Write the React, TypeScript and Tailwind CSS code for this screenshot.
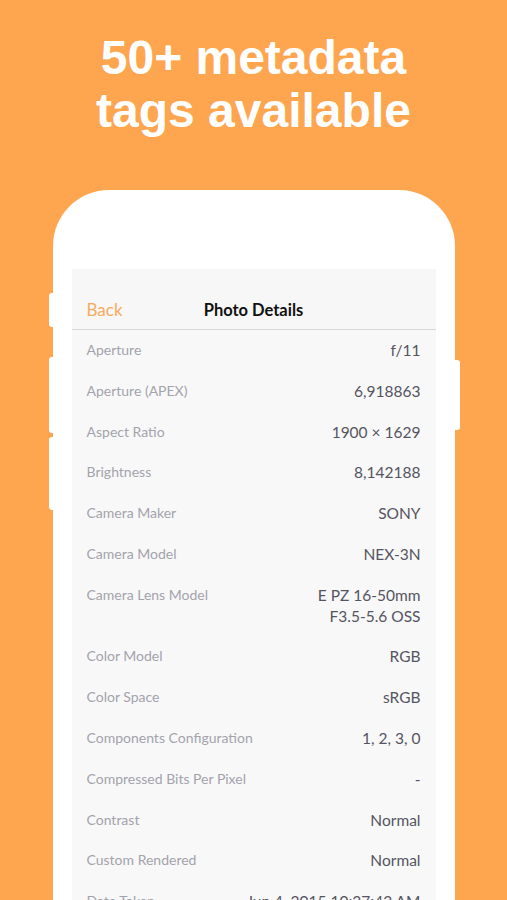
const rows: { label: string; value: string[] }[] = [
  { label: "Aperture", value: ["f/11"] },
  { label: "Aperture (APEX)", value: ["6,918863"] },
  { label: "Aspect Ratio", value: ["1900 × 1629"] },
  { label: "Brightness", value: ["8,142188"] },
  { label: "Camera Maker", value: ["SONY"] },
  { label: "Camera Model", value: ["NEX-3N"] },
  { label: "Camera Lens Model", value: ["E PZ 16-50mm", "F3.5-5.6 OSS"] },
  { label: "Color Model", value: ["RGB"] },
  { label: "Color Space", value: ["sRGB"] },
  { label: "Components Configuration", value: ["1, 2, 3, 0"] },
  { label: "Compressed Bits Per Pixel", value: ["-"] },
  { label: "Contrast", value: ["Normal"] },
  { label: "Custom Rendered", value: ["Normal"] },
  { label: "Date Taken", value: ["Jun 4, 2015 10:37:42 AM"] },
];

export default function App() {
  return (
    <div className="h-[900px] w-[507px] overflow-hidden bg-[#fea54f]">
      {/* Headline */}
      <h1 className="pt-[31px] text-center font-['Liberation_Sans',Arial,sans-serif] text-[48px] font-bold leading-[53px] text-white">
        50+ metadata
        <br />
        tags available
      </h1>

      {/* Phone */}
      <div className="relative mx-auto mt-[53px] h-[800px] w-[402px] rounded-t-[56px] bg-white pt-[79px]">
        {/* side buttons */}
        <div className="absolute left-[-4px] top-[103px] h-[34px] w-[5px] rounded-l-[3px] bg-white" />
        <div className="absolute left-[-4px] top-[167px] h-[76px] w-[5px] rounded-l-[3px] bg-white" />
        <div className="absolute left-[-4px] top-[247px] h-[73px] w-[5px] rounded-l-[3px] bg-white" />
        <div className="absolute right-[-5px] top-[170px] h-[70px] w-[6px] rounded-r-[3px] bg-white" />

        {/* Screen */}
        <div className="mx-auto w-[364px] bg-[#f8f8f9] font-['Lato','Open_Sans',sans-serif]">
          <div className="grid h-[61px] grid-cols-[1fr_auto_1fr] items-end border-b-[1.5px] border-[#d8d8d8] bg-[#f7f7f7] px-[15px] pb-[9px]">
            <span className="text-[17px] leading-[20px] text-[#f8ab5c]">Back</span>
            <span className="text-[16.5px] leading-[20px] font-bold text-[#111]">
              Photo Details
            </span>
            <span />
          </div>
          <div className="flex flex-col">
            {rows.map((r) => (
              <div
                key={r.label}
                className="flex items-start justify-between px-[15px] py-[10px]"
              >
                <span className="text-[14px] leading-[20.8px] text-[#a3a3ab]">
                  {r.label}
                </span>
                <div className="flex flex-col items-end text-[15.5px] leading-[20.8px] text-[#55555f]">
                  {r.value.map((v) => (
                    <span key={v}>{v}</span>
                  ))}
                </div>
              </div>
            ))}
          </div>
        </div>
      </div>
    </div>
  );
}
